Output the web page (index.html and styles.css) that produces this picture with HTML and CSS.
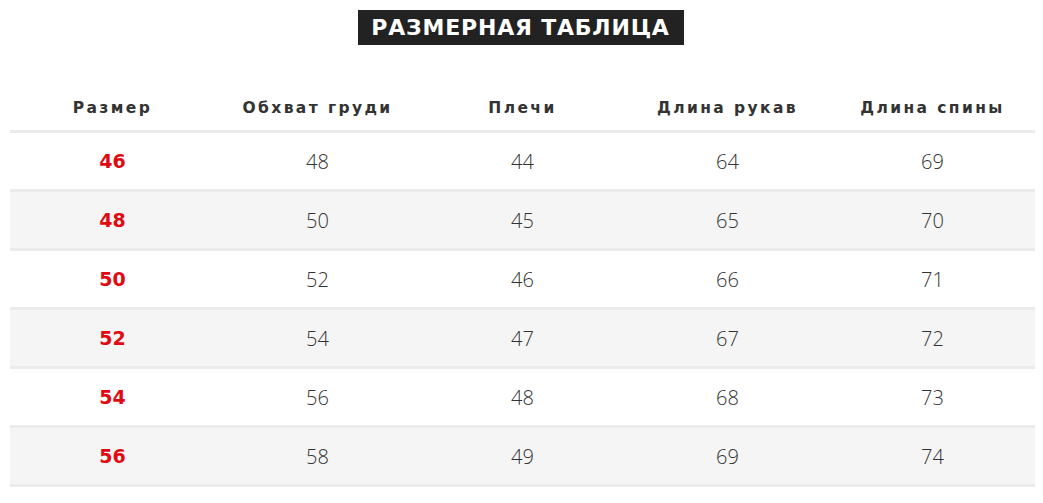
FILE: index.html
```html
<!DOCTYPE html>
<html lang="ru">
<head>
<meta charset="utf-8">
<title>Размерная таблица</title>
<link rel="stylesheet" href="styles.css">
</head>
<body>
<div class="page">
  <div class="title-wrap"><h1 class="title">РАЗМЕРНАЯ ТАБЛИЦА</h1></div>
  <table class="sizes">
    <thead>
      <tr><th>Размер</th><th>Обхват груди</th><th>Плечи</th><th>Длина рукав</th><th>Длина спины</th></tr>
    </thead>
    <tbody>
      <tr><td class="size">46</td><td>48</td><td>44</td><td>64</td><td>69</td></tr>
      <tr><td class="size">48</td><td>50</td><td>45</td><td>65</td><td>70</td></tr>
      <tr><td class="size">50</td><td>52</td><td>46</td><td>66</td><td>71</td></tr>
      <tr><td class="size">52</td><td>54</td><td>47</td><td>67</td><td>72</td></tr>
      <tr><td class="size">54</td><td>56</td><td>48</td><td>68</td><td>73</td></tr>
      <tr><td class="size">56</td><td>58</td><td>49</td><td>69</td><td>74</td></tr>
    </tbody>
  </table>
</div>
</body>
</html>
```
FILE: styles.css
```css
html, body {
  margin: 0;
  padding: 0;
  background: #fff;
}
body {
  font-family: "Open Sans", "Noto Sans", sans-serif;
  color: #333;
}
.page {
  padding: 10px 8px 0 10px;
}
.title-wrap {
  display: flex;
  justify-content: center;
}
.title {
  margin: 0 0 0 -4px;
  background: #222;
  color: #fff;
  font-family: "DejaVu Sans", sans-serif;
  font-size: 22px;
  font-weight: 700;
  line-height: 35px;
  height: 35px;
  width: 326px;
  text-align: center;
  letter-spacing: 0.8px;
}
.sizes {
  width: 1025px;
  border-collapse: collapse;
  table-layout: fixed;
  margin-top: 42px;
}
.sizes th {
  font-family: "DejaVu Sans", sans-serif;
  font-size: 15.5px;
  font-weight: 700;
  letter-spacing: 2.4px;
  color: #333;
  height: 34px;
  padding: 4px 0 5px;
  vertical-align: middle;
  border-bottom: 3px solid #ebebeb;
}
.sizes td {
  text-align: center;
  font-size: 20px;
  font-weight: 300;
  color: #333;
  height: 56px;
  padding: 0;
  border-bottom: 3px solid #ebebeb;
}
.sizes tbody tr:nth-child(even) td {
  background: #f5f5f5;
}
.sizes td.size {
  color: #e00a12;
  font-family: "DejaVu Sans", sans-serif;
  font-size: 19px;
  font-weight: 700;
}
```
